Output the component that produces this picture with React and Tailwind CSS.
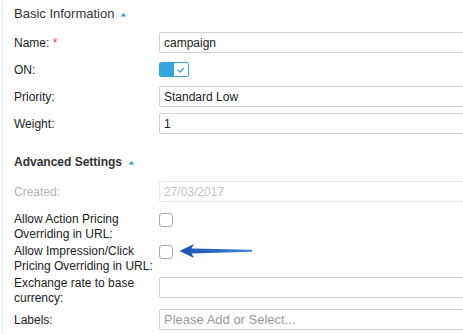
import React from 'react'

function Caret() {
  return (
    <svg width="7" height="5" viewBox="0 0 7 5" className="ml-[6px] mt-[1px]">
      <path d="M0.5 4.5 L3.5 1 L6.5 4.5 Z" fill="#3aa3db" />
    </svg>
  )
}

function Field({ value, placeholder, disabled }) {
  return (
    <div
      className={`h-[21px] w-[340px] shrink-0 rounded-[2px] border pl-[4px] flex items-center ${
        disabled ? 'border-[#e6e8ea] text-[#c4c4c4]' : 'border-[#cdd1d6] text-[#222]'
      }`}
    >
      {value ? (
        <span className="text-[12px]">{value}</span>
      ) : (
        <span className="text-[13px] text-[#999]">{placeholder}</span>
      )}
    </div>
  )
}

function Checkbox() {
  return <div className="w-[14px] h-[14px] shrink-0 rounded-[3px] border border-[#a9afb6] bg-white" />
}

function Toggle() {
  return (
    <div className="flex h-[15px] w-[30px] rounded-[2px] overflow-hidden border border-[#36a3dc]">
      <div className="flex-1 bg-[#36a3dc]" />
      <div className="w-[14px] bg-white rounded-[2px] flex items-center justify-center">
        <svg width="8" height="6" viewBox="0 0 8 6">
          <path d="M1 3 L3 5 L7 1" stroke="#36a3dc" strokeWidth="1.4" fill="none" />
        </svg>
      </div>
    </div>
  )
}

function Arrow() {
  return (
    <svg width="74" height="16" viewBox="0 0 74 16" className="ml-[6px] -mt-[2px] shrink-0">
      <defs>
        <linearGradient id="shaft" x1="0" y1="0" x2="1" y2="0">
          <stop offset="0" stopColor="#1a55b0" />
          <stop offset="1" stopColor="#3f86d8" />
        </linearGradient>
      </defs>
      <path d="M0.5 8 L15 1 L12.5 5.6 L73 6.7 L73 8.8 L12.5 10.4 L15 15 Z" fill="url(#shaft)" />
    </svg>
  )
}

function Row({ label, children, className = '', labelClass = '' }) {
  return (
    <div className={`flex items-center ${className}`}>
      <div className={`w-[145px] shrink-0 text-[12px] ${labelClass}`}>{label}</div>
      {children}
    </div>
  )
}

export default function App() {
  return (
    <div className="w-[463px] h-[334px] overflow-hidden bg-white" style={{ fontFamily: '"Liberation Sans", Arial, sans-serif' }}>
      <div className="ml-[2px] h-full border-l border-[#ececec] pl-[11px] pt-[6px] text-[#222]">
        <div className="flex items-center h-[16px] text-[13px] text-[#333]">
          Basic Information
          <Caret />
        </div>

        <div className="mt-[10px] flex flex-col gap-[6px]">
          <Row label={<span>Name: <span className="text-[#e8384f]">*</span></span>} className="h-[21px]">
            <Field value="campaign" />
          </Row>
          <Row label="ON:" className="h-[21px]">
            <Toggle />
          </Row>
          <Row label="Priority:" className="h-[21px]">
            <Field value="Standard Low" />
          </Row>
          <Row label="Weight:" className="h-[21px]">
            <Field value="1" />
          </Row>
        </div>

        <div className="mt-[20px] flex items-center h-[16px] text-[12px] font-bold text-[#333]">
          Advanced Settings
          <Caret />
        </div>

        <Row label="Created:" labelClass="text-[#b5b5b5]" className="mt-[11px] h-[21px]">
          <Field value="27/03/2017" disabled />
        </Row>

        <div className="mt-[10px] flex items-start h-[30px]">
          <div className="w-[145px] shrink-0 text-[12px] leading-[15px]">
            Allow Action Pricing
            <br />
            Overriding in URL:
          </div>
          <div className="pt-[1px]">
            <Checkbox />
          </div>
        </div>

        <div className="mt-[2px] flex items-start h-[30px]">
          <div className="w-[145px] shrink-0 text-[12px] leading-[15px]">
            Allow Impression/Click
            <br />
            Pricing Overriding in URL:
          </div>
          <div className="pt-[1px] flex items-center">
            <Checkbox />
            <Arrow />
          </div>
        </div>

        <div className="mt-[2px] flex items-start h-[30px]">
          <div className="w-[145px] shrink-0 text-[12px] leading-[15px]">
            Exchange rate to base
            <br />
            currency:
          </div>
          <div className="pt-[1px]">
            <Field value="" placeholder="" />
          </div>
        </div>

        <Row label="Labels:" className="mt-[3px] h-[21px]">
          <Field placeholder="Please Add or Select..." />
        </Row>
      </div>
    </div>
  )
}
